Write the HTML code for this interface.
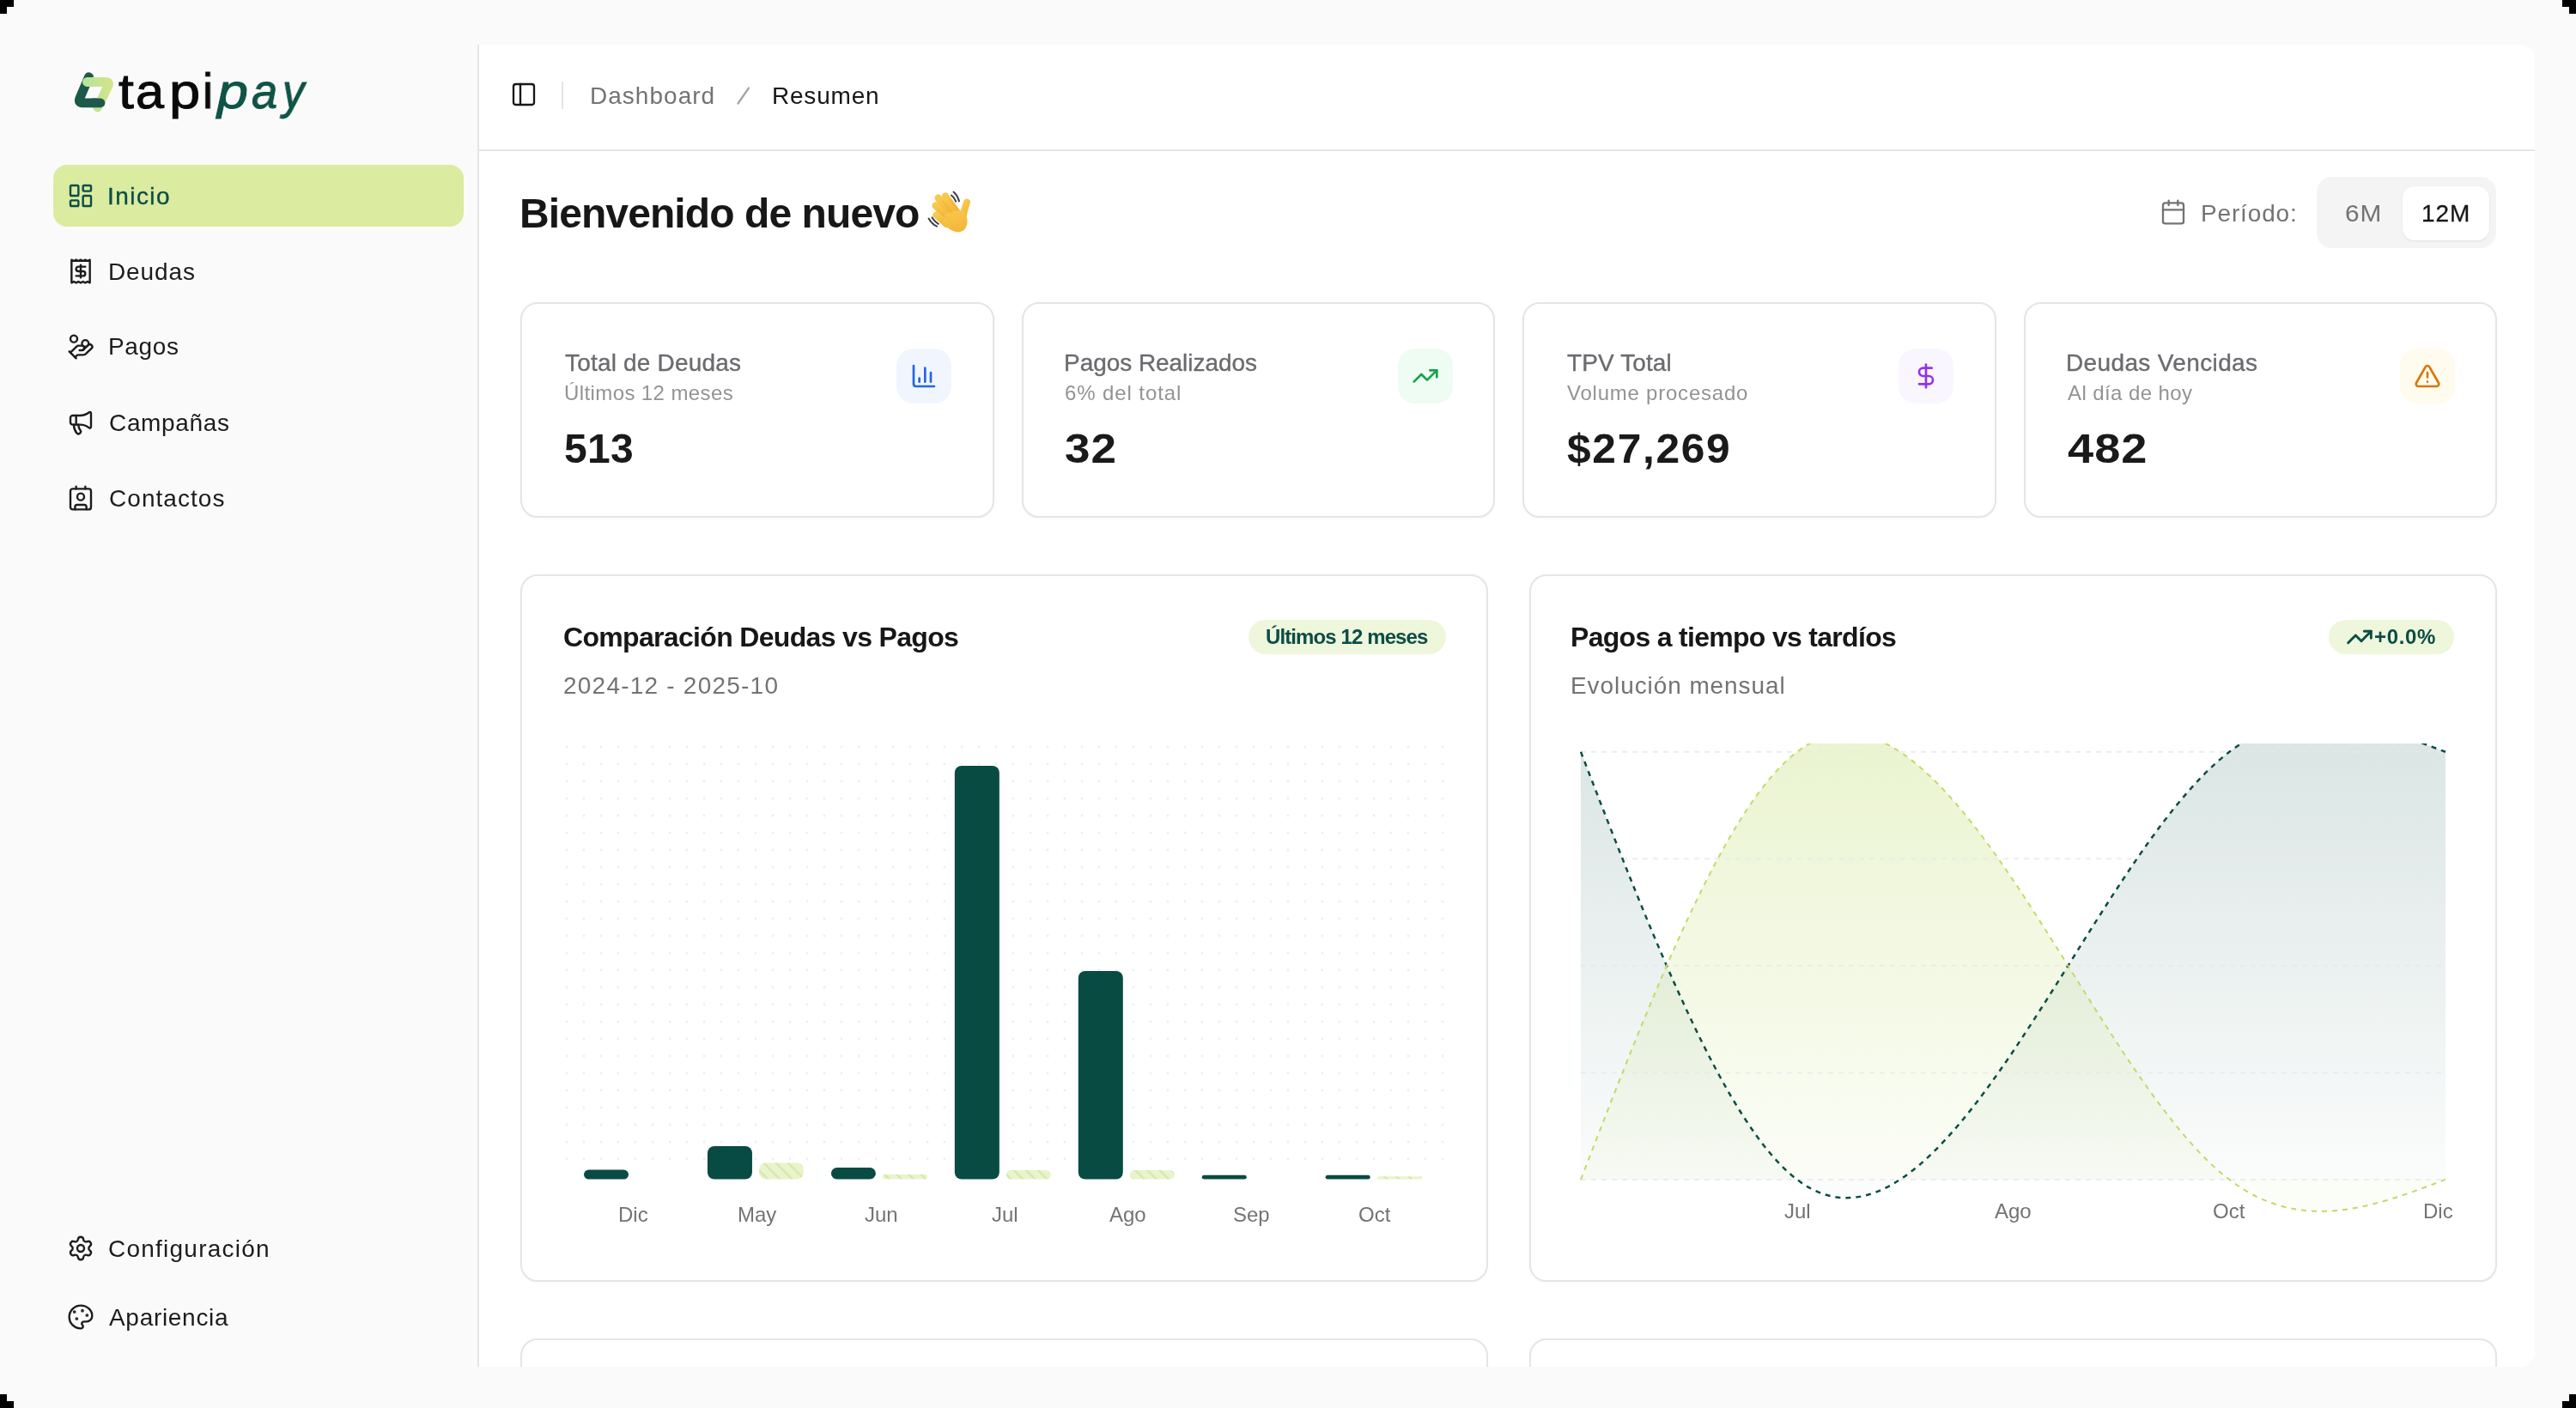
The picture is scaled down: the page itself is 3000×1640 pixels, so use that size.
<!DOCTYPE html><html><head><meta charset="utf-8"><style>
*{box-sizing:border-box}
html,body{margin:0;padding:0}
body{width:3000px;height:1640px;position:relative;overflow:hidden;background:#fafafa;font-family:"Liberation Sans",sans-serif}
.abs{position:absolute}
.ic{position:absolute;display:block}
.t{position:absolute;white-space:nowrap;line-height:normal;transform-origin:0 0;will-change:transform}
.card{position:absolute;border:2px solid #e5e5e5;border-radius:20px;background:#fff;box-shadow:0 1px 2px rgba(0,0,0,0.03)}
</style></head><body>
<div class=abs style="left:0px;top:0px;width:16px;height:8px;background:#000"></div>
<div class=abs style="left:0px;top:8px;width:8px;height:8px;background:#000"></div>
<div class=abs style="left:2984px;top:0px;width:16px;height:8px;background:#000"></div>
<div class=abs style="left:2992px;top:8px;width:8px;height:8px;background:#000"></div>
<div class=abs style="left:0px;top:1624px;width:8px;height:8px;background:#000"></div>
<div class=abs style="left:0px;top:1632px;width:16px;height:8px;background:#000"></div>
<div class=abs style="left:2992px;top:1624px;width:8px;height:8px;background:#000"></div>
<div class=abs style="left:2984px;top:1632px;width:16px;height:8px;background:#000"></div>
<div class=abs style="left:62px;top:192px;width:478px;height:72px;background:#dbeba0;border-radius:16px"></div>
<svg class=ic style="left:78px;top:212px;color:#0b4d45" width="32" height="32" viewBox="0 0 24 24" fill="none" stroke="currentColor" stroke-width="1.8" stroke-linecap="round" stroke-linejoin="round"><rect width="7" height="9" x="3" y="3" rx="1"/><rect width="7" height="5" x="14" y="3" rx="1"/><rect width="7" height="9" x="14" y="12" rx="1"/><rect width="7" height="5" x="3" y="16" rx="1"/></svg>
<svg class=ic style="left:78px;top:300px;color:#1c1c1c" width="32" height="32" viewBox="0 0 24 24" fill="none" stroke="currentColor" stroke-width="1.8" stroke-linecap="round" stroke-linejoin="round"><path d="M4 2v20l2-1 2 1 2-1 2 1 2-1 2 1 2-1 2 1V2l-2 1-2-1-2 1-2-1-2 1-2-1-2 1Z"/><path d="M16 8h-6a2 2 0 1 0 0 4h4a2 2 0 1 1 0 4H8"/><path d="M12 17.5v-11"/></svg>
<svg class=ic style="left:78px;top:387.5px;color:#1c1c1c" width="32" height="32" viewBox="0 0 24 24" fill="none" stroke="currentColor" stroke-width="1.8" stroke-linecap="round" stroke-linejoin="round"><path d="M11 15h2a2 2 0 1 0 0-4h-3c-.6 0-1.1.2-1.4.6L3 17"/><path d="m7 21 1.6-1.4c.3-.4.8-.6 1.4-.6h4c1.1 0 2.1-.4 2.8-1.2l4.6-4.4a2 2 0 0 0-2.75-2.91l-4.2 3.9"/><path d="m2 16 6 6"/><circle cx="16" cy="9" r="2.9"/><circle cx="6" cy="5" r="3"/></svg>
<svg class=ic style="left:78px;top:475.5px;color:#1c1c1c" width="32" height="32" viewBox="0 0 24 24" fill="none" stroke="currentColor" stroke-width="1.8" stroke-linecap="round" stroke-linejoin="round"><path d="M11 6a13 13 0 0 0 8.4-2.8A1 1 0 0 1 21 4v12a1 1 0 0 1-1.6.8A13 13 0 0 0 11 14H5a2 2 0 0 1-2-2V8a2 2 0 0 1 2-2z"/><path d="M6 14a12 12 0 0 0 2.4 7.2 2 2 0 0 0 3.2-2.4A8 8 0 0 1 10 14"/><path d="M8 6v8"/></svg>
<svg class=ic style="left:78px;top:563.5px;color:#1c1c1c" width="32" height="32" viewBox="0 0 24 24" fill="none" stroke="currentColor" stroke-width="1.8" stroke-linecap="round" stroke-linejoin="round"><path d="M16 2v2"/><path d="M7 22v-2a2 2 0 0 1 2-2h6a2 2 0 0 1 2 2v2"/><path d="M8 2v2"/><circle cx="12" cy="11" r="3"/><rect x="3" y="4" width="18" height="18" rx="2"/></svg>
<svg class=ic style="left:78px;top:1438px;color:#1c1c1c" width="32" height="32" viewBox="0 0 24 24" fill="none" stroke="currentColor" stroke-width="1.8" stroke-linecap="round" stroke-linejoin="round"><path d="M9.671 4.136a2.34 2.34 0 0 1 4.659 0 2.34 2.34 0 0 0 3.319 1.915 2.34 2.34 0 0 1 2.33 4.033 2.34 2.34 0 0 0 0 3.831 2.34 2.34 0 0 1-2.33 4.033 2.34 2.34 0 0 0-3.319 1.915 2.34 2.34 0 0 1-4.659 0 2.34 2.34 0 0 0-3.32-1.915 2.34 2.34 0 0 1-2.33-4.033 2.34 2.34 0 0 0 0-3.831A2.34 2.34 0 0 1 6.35 6.051a2.34 2.34 0 0 0 3.32-1.915"/><circle cx="12" cy="12" r="3"/></svg>
<svg class=ic style="left:78px;top:1518px;color:#1c1c1c" width="32" height="32" viewBox="0 0 24 24" fill="none" stroke="currentColor" stroke-width="1.8" stroke-linecap="round" stroke-linejoin="round"><path d="M12 22a1 1 0 0 1 0-20 10 9 0 0 1 10 9 5 5 0 0 1-5 5h-2.25a1.75 1.75 0 0 0-1.4 2.8l.3.4a1.75 1.75 0 0 1-1.4 2.8z"/><circle cx="13.5" cy="6.5" r=".5" fill="currentColor"/><circle cx="17.5" cy="10.5" r=".5" fill="currentColor"/><circle cx="6.5" cy="7.5" r=".5" fill="currentColor"/><circle cx="8.5" cy="13.5" r=".5" fill="currentColor"/></svg>
<svg class=abs style="left:80px;top:75px" width="60" height="60" viewBox="80 75 60 60">
<defs><linearGradient id="lg1" x1="96" y1="0" x2="134" y2="0" gradientUnits="userSpaceOnUse"><stop offset="0" stop-color="#b4e39a"/><stop offset="1" stop-color="#d8e48a"/></linearGradient>
<linearGradient id="lg2" x1="87" y1="0" x2="123" y2="0" gradientUnits="userSpaceOnUse"><stop offset="0" stop-color="#1a5a47"/><stop offset="1" stop-color="#205652"/></linearGradient></defs>
<path d="M103.5 89.6 L92.6 115.2 Q91.2 119.8 96 119.8 L116.9 119.8" fill="none" stroke="url(#lg2)" stroke-width="10.8" stroke-linecap="round" stroke-linejoin="round"/>
<path d="M101.4 95.5 L122.6 95.5 Q128 95.5 126 100 L113.8 125" fill="none" stroke="url(#lg1)" stroke-width="10.8" stroke-linecap="round" stroke-linejoin="round"/>
<path d="M108 119.8 L116.9 119.8" fill="none" stroke="url(#lg2)" stroke-width="10.8" stroke-linecap="round"/>
</svg>
<div class=abs style="left:556px;top:52px;width:2396px;height:1539.5px;background:#fff;border-top-right-radius:20px 15px;border-bottom-right-radius:17px;overflow:hidden">
<div class=abs style="left:-556px;top:-52px;width:3000px;height:1640px">
<div class=abs style="left:556px;top:52px;width:2px;height:1540px;background:#e5e5e5"></div>
<div class=abs style="left:558px;top:174px;width:2394px;height:2px;background:#e5e5e5"></div>
<div class=abs style="left:654px;top:95px;width:2px;height:32px;background:#e5e5e5"></div>
<svg class=ic style="left:594px;top:94px;color:#171717" width="32" height="32" viewBox="0 0 24 24" fill="none" stroke="currentColor" stroke-width="1.75" stroke-linecap="round" stroke-linejoin="round"><rect width="18" height="18" x="3" y="3" rx="2"/><path d="M9 3v18"/></svg>
<svg class=abs style="left:850px;top:95px" width="30" height="32"><line x1="9.5" y1="25.5" x2="22" y2="7.5" stroke="#a3a3a3" stroke-width="2.2" stroke-linecap="round"/></svg>
<svg class=abs style="left:1070px;top:210px" width="80" height="80" viewBox="0 0 80 80">
<defs><linearGradient id="hg" x1="0" y1="0" x2="0.3" y2="1"><stop offset="0" stop-color="#f9c94c"/><stop offset="1" stop-color="#f4b73a"/></linearGradient></defs>
<g stroke="#3d3d4c" stroke-width="2" fill="none" stroke-linecap="round">
<path d="M40.5 13.6 Q45 17.5 47 24.4"/><path d="M38 17.5 Q41.5 20 43.2 24.6"/>
<path d="M11.6 44.5 Q15.2 51 21 53.6"/><path d="M15.6 43.4 Q18.2 48 22.8 50.8"/>
</g>
<g stroke="url(#hg)" stroke-linecap="round" fill="none">
<path d="M31 18.5 L45 38" stroke-width="8.4"/>
<path d="M22.6 20.5 L38 41" stroke-width="8.4"/>
<path d="M19.6 29.5 L35 46" stroke-width="8.2"/>
<path d="M20.2 40.5 L32 51" stroke-width="7.6"/>
<path d="M56 25.5 Q53 34 51 44" stroke-width="8"/>
</g>
<path d="M30 40 Q40 34 52 36 Q58 42 56 52 Q53 62 43 60 Q35 58 28 50 Z" fill="url(#hg)"/>
<g stroke="#e7a532" stroke-width="0.9" fill="none" opacity="0.7"><path d="M27.5 23.5 L39 39"/><path d="M21.5 33 L33.5 45"/><path d="M36 22 L44.5 34"/></g>
</svg>
<svg class=ic style="left:2515px;top:231px;color:#737373" width="32" height="32" viewBox="0 0 24 24" fill="none" stroke="currentColor" stroke-width="1.75" stroke-linecap="round" stroke-linejoin="round"><path d="M8 2v4"/><path d="M16 2v4"/><rect width="18" height="18" x="3" y="4" rx="2"/><path d="M3 10h18"/></svg>
<div class=abs style="left:2698px;top:206px;width:209px;height:83px;background:#f4f4f5;border-radius:18px"></div>
<div class=abs style="left:2798px;top:217px;width:101px;height:63px;background:#fff;border-radius:14px;box-shadow:0 1px 3px rgba(0,0,0,0.08)"></div>
<div class=card style="left:606px;top:352px;width:551.5px;height:251px"></div>
<div class=abs style="left:1044.0px;top:406px;width:64px;height:64px;background:#f1f6fe;border-radius:20px"></div>
<svg class=ic style="left:1060.0px;top:422px;color:#2563eb" width="32" height="32" viewBox="0 0 24 24" fill="none" stroke="currentColor" stroke-width="2" stroke-linecap="round" stroke-linejoin="round"><path d="M3 3v16a2 2 0 0 0 2 2h16"/><path d="M18 17V9"/><path d="M13 17V5"/><path d="M8 17v-3"/></svg>
<div class=card style="left:1189.5px;top:352px;width:551.5px;height:251px"></div>
<div class=abs style="left:1627.5px;top:406px;width:64px;height:64px;background:#effcf3;border-radius:20px"></div>
<svg class=ic style="left:1643.5px;top:422px;color:#16a34a" width="32" height="32" viewBox="0 0 24 24" fill="none" stroke="currentColor" stroke-width="2" stroke-linecap="round" stroke-linejoin="round"><path d="M16 7h6v6"/><path d="m22 7-8.5 8.5-5-5L2 17"/></svg>
<div class=card style="left:1773px;top:352px;width:551.5px;height:251px"></div>
<div class=abs style="left:2211.0px;top:406px;width:64px;height:64px;background:#faf6ff;border-radius:20px"></div>
<svg class=ic style="left:2227.0px;top:422px;color:#9333ea" width="32" height="32" viewBox="0 0 24 24" fill="none" stroke="currentColor" stroke-width="2" stroke-linecap="round" stroke-linejoin="round"><line x1="12" x2="12" y1="2" y2="22"/><path d="M17 5H9.5a3.5 3.5 0 0 0 0 7h5a3.5 3.5 0 0 1 0 7H6"/></svg>
<div class=card style="left:2356.5px;top:352px;width:551.5px;height:251px"></div>
<div class=abs style="left:2794.5px;top:406px;width:64px;height:64px;background:#fffbee;border-radius:20px"></div>
<svg class=ic style="left:2810.5px;top:422px;color:#d97706" width="32" height="32" viewBox="0 0 24 24" fill="none" stroke="currentColor" stroke-width="2" stroke-linecap="round" stroke-linejoin="round"><path d="m21.73 18-8-14a2 2 0 0 0-3.48 0l-8 14A2 2 0 0 0 4 21h16a2 2 0 0 0 1.73-3"/><path d="M12 9v4"/><path d="M12 17h.01"/></svg>
<div class=card style="left:606px;top:669px;width:1127px;height:824px"></div>
<div class=card style="left:606px;top:1558.8px;width:1127px;height:200px"></div>
<div class=card style="left:1781px;top:669px;width:1127px;height:824px"></div>
<div class=card style="left:1781px;top:1558.8px;width:1127px;height:200px"></div>
<div class=abs style="left:1454px;top:722px;width:230px;height:40px;background:#eef6dc;border-radius:20px"></div>
<div class=abs style="left:2712px;top:722px;width:146px;height:40px;background:#eef6dc;border-radius:20px"></div>
<svg class=ic style="left:2732px;top:726px;color:#0b4d45" width="32" height="32" viewBox="0 0 24 24" fill="none" stroke="currentColor" stroke-width="2.2" stroke-linecap="round" stroke-linejoin="round"><path d="M16 7h6v6"/><path d="m22 7-8.5 8.5-5-5L2 17"/></svg>
<div class=abs style="left:650px;top:860px;width:1040px;height:500px;background-image:radial-gradient(circle at 10px 10px,#efefef 0,#efefef 1.2px,transparent 1.8px);background-size:20px 20px"></div>
<svg class=abs style="left:0;top:0" width="3000" height="1640">
<defs><pattern id="hatch" patternUnits="userSpaceOnUse" width="10" height="10" patternTransform="rotate(-45)"><rect width="10" height="10" fill="#e8f4cb"/><rect x="0" width="2.2" height="10" fill="#d6e7a8"/></pattern></defs>
<rect x="680.00" y="1362.5" width="52" height="11.10" rx="5.55" fill="#084b43"/>
<rect x="823.95" y="1335" width="52" height="38.60" rx="8.00" fill="#084b43"/>
<rect x="883.95" y="1354.5" width="52" height="19.10" rx="8.00" fill="url(#hatch)"/>
<rect x="967.90" y="1360" width="52" height="13.60" rx="6.80" fill="#084b43"/>
<rect x="1027.90" y="1368" width="52" height="5.60" rx="2.80" fill="url(#hatch)"/>
<rect x="1111.85" y="891.9" width="52" height="481.70" rx="8.00" fill="#084b43"/>
<rect x="1171.85" y="1363" width="52" height="10.60" rx="5.30" fill="url(#hatch)"/>
<rect x="1255.80" y="1131" width="52" height="242.60" rx="8.00" fill="#084b43"/>
<rect x="1315.80" y="1363" width="52" height="10.60" rx="5.30" fill="url(#hatch)"/>
<rect x="1399.75" y="1368.7" width="52" height="4.90" rx="2.45" fill="#084b43"/>
<rect x="1543.70" y="1368.7" width="52" height="4.90" rx="2.45" fill="#084b43"/>
<rect x="1603.70" y="1370.2" width="52" height="3.40" rx="1.70" fill="url(#hatch)"/>
</svg>
<svg class=abs style="left:0;top:0" width="3000" height="1640">
<defs><clipPath id="cp"><rect x="1800" y="866" width="1100" height="600"/></clipPath>
<linearGradient id="gd" x1="0" y1="866" x2="0" y2="1400" gradientUnits="userSpaceOnUse"><stop offset="0" stop-color="#0d5a4c" stop-opacity="0.15"/><stop offset="1" stop-color="#0b4d45" stop-opacity="0.01"/></linearGradient>
<linearGradient id="gl" x1="0" y1="866" x2="0" y2="1400" gradientUnits="userSpaceOnUse"><stop offset="0" stop-color="#c5e07a" stop-opacity="0.35"/><stop offset="1" stop-color="#c5e07a" stop-opacity="0.05"/></linearGradient></defs>
<g clip-path="url(#cp)">
<path d="M1841.00,875.80C1924.92,1092.83,2008.83,1309.86,2092.75,1373.90C2176.67,1437.94,2260.58,1349.00,2344.50,1224.47C2428.42,1099.94,2512.33,939.84,2596.25,875.80C2680.17,811.76,2764.08,843.78,2848.00,875.80L2848,1373.9L1841,1373.9Z" fill="url(#gd)"/>
<path d="M1841.00,1373.90C1924.92,1156.87,2008.83,939.84,2092.75,875.80C2176.67,811.76,2260.58,900.71,2344.50,1025.23C2428.42,1149.75,2512.33,1309.86,2596.25,1373.90C2680.17,1437.94,2764.08,1405.92,2848.00,1373.90L2848,1373.9L1841,1373.9Z" fill="url(#gl)"/>
</g>
<line x1="1841" x2="2848" y1="875.80" y2="875.80" stroke="#e6eaea" stroke-opacity="0.8" stroke-width="2" stroke-dasharray="6 6"/>
<line x1="1841" x2="2848" y1="1000.33" y2="1000.33" stroke="#e6eaea" stroke-opacity="0.8" stroke-width="2" stroke-dasharray="6 6"/>
<line x1="1841" x2="2848" y1="1124.85" y2="1124.85" stroke="#e6eaea" stroke-opacity="0.8" stroke-width="2" stroke-dasharray="6 6"/>
<line x1="1841" x2="2848" y1="1249.38" y2="1249.38" stroke="#e6eaea" stroke-opacity="0.8" stroke-width="2" stroke-dasharray="6 6"/>
<line x1="1841" x2="2848" y1="1373.90" y2="1373.90" stroke="#e6eaea" stroke-opacity="0.8" stroke-width="2" stroke-dasharray="6 6"/>
<g clip-path="url(#cp)">
<path d="M1841.00,875.80C1924.92,1092.83,2008.83,1309.86,2092.75,1373.90C2176.67,1437.94,2260.58,1349.00,2344.50,1224.47C2428.42,1099.94,2512.33,939.84,2596.25,875.80C2680.17,811.76,2764.08,843.78,2848.00,875.80" fill="none" stroke="#0b4d45" stroke-width="2.5" stroke-dasharray="6 6"/>
<path d="M1841.00,1373.90C1924.92,1156.87,2008.83,939.84,2092.75,875.80C2176.67,811.76,2260.58,900.71,2344.50,1025.23C2428.42,1149.75,2512.33,1309.86,2596.25,1373.90C2680.17,1437.94,2764.08,1405.92,2848.00,1373.90" fill="none" stroke="#c3d968" stroke-width="2" stroke-dasharray="6 6"/>
</g></svg>
<div class=t style="left:687.40px;top:96.40px;font-size:28px;font-weight:400;color:#737373;letter-spacing:1.024px">Dashboard</div>
<div class=t style="left:899.00px;top:96.40px;font-size:28px;font-weight:400;color:#171717;letter-spacing:0.790px">Resumen</div>
<div class=t style="left:604.80px;top:220.80px;font-size:48px;font-weight:700;color:#171717;letter-spacing:-0.912px">Bienvenido de nuevo</div>
<div class=t style="left:2563.00px;top:232.80px;font-size:28px;font-weight:400;color:#737373;letter-spacing:0.847px">Período:</div>
<div class=t style="left:2730.53px;top:232.80px;font-size:28px;font-weight:400;color:#737373;letter-spacing:0.900px;transform:scaleX(1.0675)">6M</div>
<div class=t style="left:2819.80px;top:232.80px;font-size:28px;font-weight:400;color:#171717;letter-spacing:0.900px;-webkit-text-stroke:0.3px #171717">12M</div>
<div class=t style="left:657.50px;top:407.00px;font-size:28px;font-weight:400;color:#6b6b6f;letter-spacing:0.189px;-webkit-text-stroke:0.35px #6b6b6f">Total de Deudas</div>
<div class=t style="left:656.50px;top:443.80px;font-size:24px;font-weight:400;color:#939396;letter-spacing:0.398px">Últimos 12 meses</div>
<div class=t style="left:656.50px;top:495.40px;font-size:48px;font-weight:700;color:#1a1a1a;letter-spacing:0.305px">513</div>
<div class=t style="left:1239.00px;top:407.00px;font-size:28px;font-weight:400;color:#6b6b6f;letter-spacing:-0.046px;-webkit-text-stroke:0.35px #6b6b6f">Pagos Realizados</div>
<div class=t style="left:1240.00px;top:443.80px;font-size:24px;font-weight:400;color:#939396;letter-spacing:0.902px">6% del total</div>
<div class=t style="left:1239.90px;top:495.40px;font-size:48px;font-weight:700;color:#1a1a1a;letter-spacing:0.900px;transform:scaleX(1.1048)">32</div>
<div class=t style="left:1824.50px;top:407.00px;font-size:28px;font-weight:400;color:#6b6b6f;letter-spacing:0.105px;-webkit-text-stroke:0.35px #6b6b6f">TPV Total</div>
<div class=t style="left:1824.50px;top:443.80px;font-size:24px;font-weight:400;color:#939396;letter-spacing:0.770px">Volume procesado</div>
<div class=t style="left:1824.50px;top:495.40px;font-size:48px;font-weight:700;color:#1a1a1a;letter-spacing:1.600px;transform:scaleX(1.0363)">$27,269</div>
<div class=t style="left:2406.00px;top:407.00px;font-size:28px;font-weight:400;color:#6b6b6f;letter-spacing:0.362px;-webkit-text-stroke:0.35px #6b6b6f">Deudas Vencidas</div>
<div class=t style="left:2408.00px;top:443.80px;font-size:24px;font-weight:400;color:#939396;letter-spacing:0.409px">Al día de hoy</div>
<div class=t style="left:2408.00px;top:495.40px;font-size:48px;font-weight:700;color:#1a1a1a;letter-spacing:0.900px;transform:scaleX(1.1298)">482</div>
<div class=t style="left:655.60px;top:724.00px;font-size:32px;font-weight:700;color:#171717;letter-spacing:-0.676px">Comparación Deudas vs Pagos</div>
<div class=t style="left:655.60px;top:782.80px;font-size:28px;font-weight:400;color:#737373;letter-spacing:1.223px">2024-12 - 2025-10</div>
<div class=t style="left:1474.00px;top:728.00px;font-size:24px;font-weight:700;color:#0b4d45;letter-spacing:-0.895px">Últimos 12 meses</div>
<div class=t style="left:1829.00px;top:724.00px;font-size:32px;font-weight:700;color:#171717;letter-spacing:-0.699px">Pagos a tiempo vs tardíos</div>
<div class=t style="left:1829.00px;top:782.80px;font-size:28px;font-weight:400;color:#737373;letter-spacing:0.919px">Evolución mensual</div>
<div class=t style="left:2765.00px;top:727.60px;font-size:24px;font-weight:700;color:#0b4d45;letter-spacing:0.655px">+0.0%</div>
<div class=t style="left:720.17px;top:1401.20px;font-size:24px;font-weight:400;color:#737373;letter-spacing:0.000px">Dic</div>
<div class=t style="left:858.73px;top:1401.20px;font-size:24px;font-weight:400;color:#737373;letter-spacing:0.000px">May</div>
<div class=t style="left:1007.13px;top:1401.20px;font-size:24px;font-weight:400;color:#737373;letter-spacing:0.000px">Jun</div>
<div class=t style="left:1155.03px;top:1401.20px;font-size:24px;font-weight:400;color:#737373;letter-spacing:0.000px">Jul</div>
<div class=t style="left:1292.42px;top:1401.20px;font-size:24px;font-weight:400;color:#737373;letter-spacing:0.000px">Ago</div>
<div class=t style="left:1435.82px;top:1401.20px;font-size:24px;font-weight:400;color:#737373;letter-spacing:0.000px">Sep</div>
<div class=t style="left:1582.07px;top:1401.20px;font-size:24px;font-weight:400;color:#737373;letter-spacing:0.000px">Oct</div>
<div class=t style="left:2078.08px;top:1396.60px;font-size:24px;font-weight:400;color:#737373;letter-spacing:0.000px">Jul</div>
<div class=t style="left:2323.32px;top:1396.60px;font-size:24px;font-weight:400;color:#737373;letter-spacing:0.000px">Ago</div>
<div class=t style="left:2576.92px;top:1396.60px;font-size:24px;font-weight:400;color:#737373;letter-spacing:0.000px">Oct</div>
<div class=t style="left:2822.14px;top:1396.60px;font-size:24px;font-weight:400;color:#737373;letter-spacing:0.000px">Dic</div>
</div></div>
<div class=t style="left:124.50px;top:213.00px;font-size:28px;font-weight:400;color:#0b4d45;letter-spacing:1.441px;-webkit-text-stroke:0.35px #0b4d45">Inicio</div>
<div class=t style="left:125.50px;top:300.50px;font-size:28px;font-weight:400;color:#1c1c1c;letter-spacing:0.898px">Deudas</div>
<div class=t style="left:125.50px;top:388.00px;font-size:28px;font-weight:400;color:#1c1c1c;letter-spacing:0.652px">Pagos</div>
<div class=t style="left:126.50px;top:476.60px;font-size:28px;font-weight:400;color:#1c1c1c;letter-spacing:0.656px">Campañas</div>
<div class=t style="left:126.50px;top:564.50px;font-size:28px;font-weight:400;color:#1c1c1c;letter-spacing:1.054px">Contactos</div>
<div class=t style="left:126.00px;top:1439.00px;font-size:28px;font-weight:400;color:#1c1c1c;letter-spacing:1.233px">Configuración</div>
<div class=t style="left:127.00px;top:1519.00px;font-size:28px;font-weight:400;color:#1c1c1c;letter-spacing:0.697px">Apariencia</div>
<div class=t style="left:137.50px;top:72.40px;font-size:58px;color:#0a0a0a;-webkit-text-stroke:1px #0a0a0a;transform:scaleX(1.106)">t</div><div class=t style="left:158.25px;top:72.40px;font-size:58px;color:#0a0a0a;-webkit-text-stroke:1px #0a0a0a;transform:scaleX(1.023)">a</div><div class=t style="left:196.53px;top:72.40px;font-size:58px;color:#0a0a0a;-webkit-text-stroke:1px #0a0a0a;transform:scaleX(1.122)">p</div><div class=t style="left:235.70px;top:72.40px;font-size:58px;color:#0a0a0a;-webkit-text-stroke:1px #0a0a0a;transform:scaleX(0.933)">i</div><div class=t style="left:252.93px;top:72.40px;font-size:58px;font-style:italic;color:#0f5446;-webkit-text-stroke:1px #0f5446;transform:scaleX(1.115)">p</div><div class=t style="left:293.07px;top:72.40px;font-size:58px;font-style:italic;color:#0f5446;-webkit-text-stroke:1px #0f5446;transform:scaleX(0.933)">a</div><div class=t style="left:329.21px;top:72.40px;font-size:58px;font-style:italic;color:#0f5446;-webkit-text-stroke:1px #0f5446;transform:scaleX(0.878)">y</div>
</body></html>
